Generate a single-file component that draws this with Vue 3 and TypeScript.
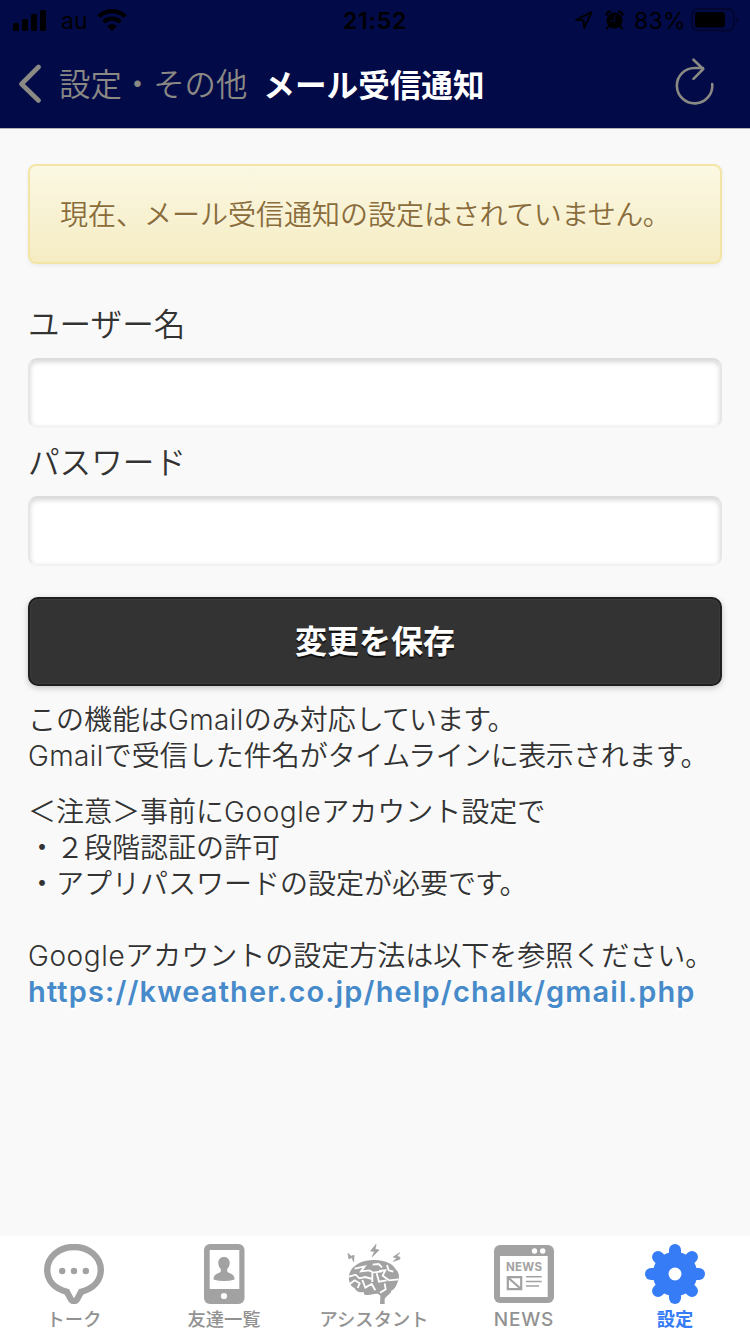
<script setup lang="ts">
import { ref } from 'vue'

const username = ref('')
const password = ref('')
const bars: number[] = [8, 12, 17, 21]
const teeth: number[] = [0, 45, 90, 135]
</script>

<template>
  <div class="screen">
    <header>
      <div class="status">
        <div class="status-left">
          <div class="signal">
            <i v-for="h in bars" :key="h" :style="{ height: h + 'px' }"></i>
          </div>
          <span class="carrier">au</span>
          <svg class="wifi" width="30" height="22" viewBox="0 0 30 22">
            <g fill="none" stroke="#000" stroke-width="4.2">
              <path d="M1.7 7.6A19 19 0 0 1 28.3 7.6" />
              <path d="M6.6 13A12 12 0 0 1 23.4 13" />
            </g>
            <path d="M15 22L10 17.2A7.2 7.2 0 0 1 20 17.2Z" />
          </svg>
        </div>
        <span class="time">21:52</span>
        <div class="status-right">
          <svg class="arrow" width="18" height="18" viewBox="0 0 18 18">
            <path d="M1.2 8.8L16.6 1.2L9.2 16.8L8.5 9.4Z" fill="none" stroke="#000" stroke-width="1.9" stroke-linejoin="round" />
          </svg>
          <svg class="alarm" width="19" height="20" viewBox="0 0 19 20">
            <circle cx="9.5" cy="10.5" r="8" />
            <path d="M1.5 4.8Q2 2 5 1.4M17.5 4.8Q17 2 14 1.4" stroke="#000" stroke-width="2.2" fill="none" stroke-linecap="round" />
            <path d="M3.8 16L2 18.5M15.2 16L17 18.5" stroke="#000" stroke-width="2" stroke-linecap="round" />
            <path d="M9.7 5V11H5.2" fill="none" stroke="#020a48" stroke-width="1" />
          </svg>
          <span class="percent">83%</span>
          <svg class="battery" width="49" height="24" viewBox="0 0 49 24">
            <rect x="1" y="1" width="42" height="21.5" rx="6" fill="none" stroke="#020630" stroke-width="2" />
            <rect x="4" y="4" width="30" height="15.5" rx="3" />
            <path d="M45.3 8.5Q47.5 9.5 47.5 11.8T45.3 15Z" fill="#020630" />
          </svg>
        </div>
      </div>
      <nav>
        <svg class="chevron" width="24" height="40" viewBox="0 0 24 40">
          <path d="M20.5 3L3.5 20L20.5 36.5" fill="none" stroke="#8a8984" stroke-width="4.6" stroke-linecap="round" stroke-linejoin="round" />
        </svg>
        <span class="back">設定・その他</span>
        <h1>メール受信通知</h1>
        <svg class="reload" width="40" height="48" viewBox="0 0 40 48">
          <path d="M37.2 26A17.7 17.7 0 1 1 19.5 10H28M18.5 1.7L28.2 11L18.5 20.8" fill="none" stroke="#8a8984" stroke-width="2.6" stroke-linecap="round" stroke-linejoin="round" />
        </svg>
      </nav>
    </header>

    <main>
      <div class="alert">現在、メール受信通知の設定は<span class="snug">されていません。</span></div>
      <form @submit.prevent>
        <label for="user">ユーザー名</label>
        <input id="user" v-model="username" type="text" />
        <label for="pass">パスワード</label>
        <input id="pass" v-model="password" type="password" />
        <button type="submit"><span>変更を保存</span></button>
      </form>
      <p>この機能は<span class="gmail">Gmail</span>のみ対応<span class="tight">しています。</span><br /><span class="gmail">Gmail</span>で受信した件名が<span class="snug">タイムラインに表示されます。</span></p>
      <p>＜注意＞事前に<span class="google">Google</span>アカウント設定で<br />・２段階認証の許可<br />・アプリパスワードの設定が必要<span class="tight">です。</span><br /><br /><span class="google">Google</span>アカウントの設定方法は以下を参照ください。<br /><a href="#">https://kweather.co.jp/help/chalk/gmail.php</a></p>
    </main>

    <footer>
      <div class="tab">
        <svg width="60" height="60" viewBox="0 0 60 60">
          <path d="M30 3C45 3 56.8 13 56.8 26C56.8 36.5 49.5 44.5 37.2 47.8L33 55.5Q30 59 27 55.5L22.8 47.8C10.5 44.5 3.2 36.5 3.2 26C3.2 13 15 3 30 3Z" fill="none" stroke="#a2a2a2" stroke-width="6.4" />
          <g fill="#a2a2a2"><circle cx="18.2" cy="27" r="3.2" /><circle cx="30" cy="27" r="3.2" /><circle cx="41.8" cy="27" r="3.2" /></g>
        </svg>
        <span>トーク</span>
      </div>
      <div class="tab">
        <svg width="60" height="60" viewBox="0 0 60 60">
          <rect x="10" width="40.5" height="60" rx="6" fill="#a2a2a2" />
          <rect x="15.7" y="6" width="29.6" height="39" fill="#fff" />
          <circle cx="30" cy="52" r="3.1" fill="#fff" />
          <path d="M30 13C34 13 35.9 16 35.7 19.5C35.6 22.5 34 24 33.2 25.3V27.5C35 30 40.6 29.2 40.6 35.5Q30 38.5 19.5 35.5C19.5 29.2 25 30 26.8 27.5V25.3C26 24 24.4 22.5 24.3 19.5C24.1 16 26 13 30 13Z" fill="#a2a2a2" />
        </svg>
        <span>友達一覧</span>
      </div>
      <div class="tab">
        <svg width="60" height="60" viewBox="102 42 180 180">
          <g fill="#a2a2a2">
            <path d="M117 140C117 118 141 94 180 91C214 86 249 99 258 119C269 127 269 147 262 158C258 169 253 179 244 182C242 194 226 198 224 208V222H210L211 198C204 185 190 194 174 195C163 196 159 191 162 185C149 190 137 183 134 174C123 171 115 155 117 140Z" />
            <g stroke="#a2a2a2" stroke-width="2.5" stroke-linejoin="round">
              <path d="M198 43L182 63L194 64L187 80L207 60L195 58Z" />
              <path d="M114 70L117 87L125 82L131 95L132 76L123 79Z" />
              <path d="M269 68L250 81L261 84L250 94L269 88L270 82L260 79Z" />
            </g>
          </g>
          <path d="M117 140L137 134L148 145L166 141L187 147M134 116L164 109L153 124L178 121M119 162L134 151L149 160L143 174M157 150L166 173L185 162L196 181M178 121L187 127L187 156M188 104L206 102L216 112M207 123L226 121L218 137L237 151L266 148M231 105L236 121L250 125M187 128L216 124M200 130L207 155L230 151M210 188L227 178L224 160" fill="none" stroke="#fff" stroke-width="5.5" />
        </svg>
        <span>アシスタント</span>
      </div>
      <div class="tab">
        <svg width="60" height="60" viewBox="0 0 60 60">
          <rect y="1" width="60" height="58" rx="6" fill="#a2a2a2" />
          <rect x="6" y="12" width="47.7" height="41" fill="#fff" />
          <circle cx="40.5" cy="7" r="2.7" fill="#fff" /><circle cx="48.7" cy="7" r="2.7" fill="#fff" />
          <text x="12" y="27.2" textLength="36" font-size="11.5" font-weight="700" fill="#a2a2a2">NEWS</text>
          <path d="M13.8 33.2H27.2V45.2H13.8ZM14 33.5L27 45" fill="none" stroke="#a2a2a2" stroke-width="2.2" />
          <path d="M32 32.8H47.7M32 37.5H47.7M32 42H45" stroke="#a2a2a2" stroke-width="1.5" />
        </svg>
        <span class="latin">NEWS</span>
      </div>
      <div class="tab active">
        <svg width="60" height="60" viewBox="0 0 60 60">
          <circle cx="30" cy="30" r="22.3" fill="#357cf6" />
          <g stroke="#357cf6" stroke-width="12" stroke-linecap="round">
            <path v-for="a in teeth" :key="a" d="M6 30H54" :transform="`rotate(${a} 30 30)`" />
          </g>
          <circle cx="30" cy="30" r="6.5" fill="#fff" />
        </svg>
        <span>設定</span>
      </div>
    </footer>
  </div>
</template>

<style>
body {
  margin: 0;
  background: #f9f9f9;
}
</style>

<style scoped>
.screen {
  width: 750px;
  height: 1334px;
  display: flex;
  flex-direction: column;
  overflow: hidden;
  background: #f9f9f9;
  color: #333;
  font-family: Inter, "Noto Sans CJK JP", sans-serif;
}
header {
  height: 129px;
  box-sizing: border-box;
  background: #020a48;
  border-bottom: 1px solid #b3b3b3;
}
.status {
  height: 40px;
  display: grid;
  grid-template-columns: 1fr auto 1fr;
  align-items: center;
  color: #000;
}
.status-left,
.status-right {
  display: flex;
  align-items: center;
}
.status-left {
  padding-left: 13px;
}
.signal {
  display: flex;
  align-items: flex-end;
  gap: 3px;
  height: 21px;
}
.signal i {
  width: 6px;
  border-radius: 1.5px;
  background: #000;
}
.carrier {
  margin-left: 15px;
  padding-top: 2px;
  width: 26px;
  font-size: 23px;
}
.wifi {
  margin-left: 10px;
}
.time {
  padding-top: 2px;
  font-size: 23px;
  font-weight: 600;
  letter-spacing: 0.8px;
}
.status-right {
  justify-content: flex-end;
  padding-right: 10px;
}
.alarm {
  margin-left: 12px;
}
.percent {
  margin-left: 10px;
  padding-top: 2px;
  font-size: 23px;
  letter-spacing: 0.3px;
}
.battery {
  margin-left: 5px;
}
nav {
  height: 88px;
  display: flex;
  align-items: center;
  padding: 0 35px 0 18px;
}
.back {
  margin: -3px 0 0 17px;
  color: #8a8984;
  font-size: 31.4px;
  font-weight: 350;
}
h1 {
  margin: -3px 0 0 16px;
  color: #fff;
  font-size: 31.6px;
  font-weight: 700;
}
.reload {
  margin: -5px 0 0 auto;
}
main {
  flex: 1;
  padding: 35px 28px 0;
  text-shadow: 0 2px 0 #fff;
}
.alert {
  height: 100px;
  box-sizing: border-box;
  padding-left: 30px;
  border: 2px solid #f3e5a5;
  border-radius: 8px;
  background: linear-gradient(#fbf8e3, #f5ecc3);
  box-shadow: 0 2px 4px rgba(0, 0, 0, 0.06);
  color: #8a6d3b;
  font-size: 28px;
  font-weight: 350;
  line-height: 98px;
  text-shadow: 0 2px 0 rgba(255, 255, 255, 0.25);
}
form {
  display: flex;
  flex-direction: column;
  padding-top: 34px;
}
label {
  height: 60px;
  font-size: 31.6px;
  font-weight: 350;
  line-height: 53px;
}
input {
  height: 70px;
  box-sizing: border-box;
  border: 2px solid #e6e6e6;
  border-top-color: #dcdcdc;
  border-bottom-color: #f3f3f3;
  border-radius: 9px;
  outline: none;
  background: #fff;
  box-shadow: inset 0 2px 5px rgba(0, 0, 0, 0.17);
  font-size: 30px;
}
#user {
  margin-bottom: 8px;
}
button {
  height: 89px;
  margin: 31px 0 16px;
  padding: 0 0 5px;
  border: 2px solid #1f1f1f;
  border-radius: 10px;
  background: #333;
  box-shadow: 0 2px 6px rgba(0, 0, 0, 0.22), inset 0 0 1px 1px rgba(255, 255, 255, 0.05);
  color: #fff;
  font-family: inherit;
  font-size: 32px;
  font-weight: 700;
  text-shadow: 0 2px 0 #111;
}
p {
  margin: 0 0 20px;
  font-size: 28px;
  font-weight: 350;
  line-height: 36px;
  white-space: nowrap;
}
.gmail {
  letter-spacing: 0.4px;
}
.google {
  letter-spacing: 0.6px;
}
.snug {
  letter-spacing: -0.5px;
}
.tight {
  letter-spacing: -0.9px;
}
a {
  color: #468aca;
  font-size: 29px;
  font-weight: 600;
  letter-spacing: 1.13px;
  text-decoration: none;
}
footer {
  height: 98px;
  display: grid;
  grid-template-columns: repeat(5, 1fr);
  background: #fff;
}
.tab {
  display: flex;
  flex-direction: column;
  align-items: center;
  padding-top: 8px;
  margin-left: -2px;
  color: #929292;
  font-size: 18.3px;
  font-weight: 500;
  line-height: 30px;
  white-space: nowrap;
}
.tab svg {
  flex: none;
}
.latin {
  padding-top: 1px;
  font-size: 19px;
  letter-spacing: 0.8px;
}
.active {
  margin-left: 0;
  color: #357cf6;
  font-weight: 700;
}
</style>
